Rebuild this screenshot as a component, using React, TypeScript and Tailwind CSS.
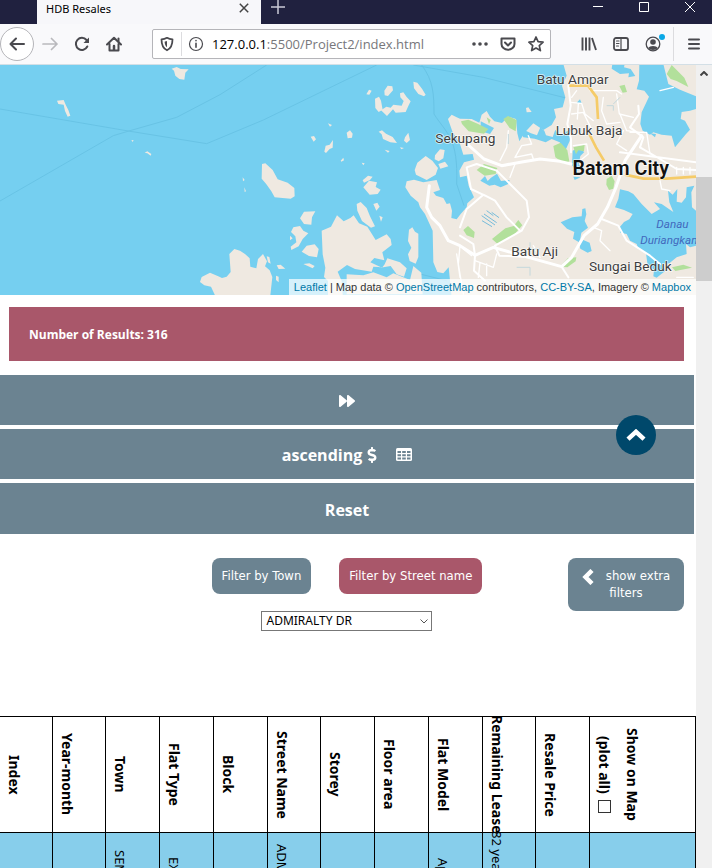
import React from "react";
import { FaDollarSign, FaForward } from "react-icons/fa";

const LAND = "#efe9e1";
const WATER = "#75cff0";
const PARK = "#b2e09b";

const blueBar =
  "flex w-full items-center justify-center bg-[#6b8391] pt-0.5 text-[16px] leading-5 font-bold text-white";

function Icon({ children, className = "" }: { children: React.ReactNode; className?: string }) {
  return (
    <svg
      viewBox="0 0 16 16"
      fill="none"
      stroke="currentColor"
      strokeWidth="2"
      strokeLinecap="round"
      strokeLinejoin="round"
      className={`size-4 shrink-0 ${className}`}
      aria-hidden="true"
    >
      {children}
    </svg>
  );
}

function TabStrip() {
  return (
    <div className="flex h-6 shrink-0 items-stretch bg-[#20213f] text-white">
      <div className="ml-[37px] flex w-56 items-start justify-between bg-[#f7f7fa] pr-3 pl-[9px] font-['Noto_Sans',sans-serif] text-[11px] leading-[18px] text-black">
        <span>HDB Resales</span>
        <button aria-label="Close tab" className="mt-px">
          <svg viewBox="0 0 10 14" className="h-3.5 w-2.5 text-[#444]" stroke="currentColor" strokeWidth="1.5" aria-hidden="true">
            <path d="M.8 2.8l8.4 8.4M9.2 2.8L.8 11.2" />
          </svg>
        </button>
      </div>
      <button aria-label="New tab" className="ml-2.5 self-start">
        <svg viewBox="0 0 14 14" className="size-3.5 text-[#c9c9d6]" stroke="currentColor" strokeWidth="1.5" aria-hidden="true">
          <path d="M0 7h14M7 0v14" />
        </svg>
      </button>
      <div className="ml-auto flex items-start gap-9 pt-0.5 pr-[17px]">
        <button aria-label="Minimize">
          <svg viewBox="0 0 10 10" className="size-2.5" stroke="white" aria-hidden="true"><path d="M0 4.500h10" /></svg>
        </button>
        <button aria-label="Maximize">
          <svg viewBox="0 0 10 10" className="size-2.5" stroke="white" fill="none" aria-hidden="true"><path d="M.5.5h9v9h-9z" /></svg>
        </button>
        <button aria-label="Close">
          <svg viewBox="0 0 10 10" className="size-2.5" stroke="white" aria-hidden="true"><path d="M0 0l10 10M10 0L0 10" /></svg>
        </button>
      </div>
    </div>
  );
}

function Toolbar() {
  return (
    <div className="flex h-[41px] shrink-0 items-center border-b border-[#d3dfe6] bg-[#f9f9fb] text-[#4a4a4f]">
      <button aria-label="Back" className="flex size-[34px] shrink-0 items-center justify-center rounded-full border border-[#b5b5b9] bg-white">
        <Icon><path d="M15 8H1.500M7 2.500L1.500 8 7 13.500" /></Icon>
      </button>
      <button aria-label="Forward" className="ml-2 text-[#b9b9bd]">
        <Icon><path d="M1 8h14M9.500 2.500L15 8l-5.500 5.500" strokeWidth="1.700" /></Icon>
      </button>
      <button aria-label="Reload" className="ml-4">
        <Icon>
          <path d="M13.300 10.500A6 6 0 1 1 12.500 4" />
          <path d="M15 1.500V7H9.500z" fill="currentColor" stroke="none" />
        </Icon>
      </button>
      <button aria-label="Home" className="ml-4">
        <Icon>
          <path d="M1 8.500L8 1.800l7 6.700M3.500 8v6.500h9V8" />
          <path d="M8 13.500V10" strokeWidth="2.500" />
          <path d="M12.500 2.500v3" />
        </Icon>
      </button>
      <div className="ml-[30px] flex h-[30px] min-w-0 flex-1 items-center rounded-[2px] border border-[#b5b5b9] bg-white pr-1.5 pl-1.5">
        <Icon>
          <path d="M8 1.800C6 3 4 3.300 2.500 3.300c0 5 1 9 5.500 11 4.500-2 5.500-6 5.500-11C12 3.300 10 3 8 1.800z" strokeWidth="1.800" />
          <path d="M8 5C7 5.500 6.500 5.600 5.600 5.700c.2 2.600.8 4.400 2.400 5.600z" fill="currentColor" stroke="none" />
        </Icon>
        <span className="mx-1.5 h-6 w-px bg-[#dcdcdf]" />
        <Icon>
          <circle cx="8" cy="8" r="6.500" strokeWidth="1.200" />
          <path d="M8 7.300v4M8 4.600v.2" strokeWidth="1.600" />
        </Icon>
        <div className="relative ml-2 min-w-0 flex-1 text-[13px] leading-5">
          <input
            aria-label="Address"
            className="block w-full bg-transparent text-[#77777b] outline-none"
            defaultValue="127.0.0.1:5500/Project2/index.html"
          />
          <span aria-hidden="true" className="pointer-events-none absolute top-0 left-0 bg-white text-black">127.0.0.1</span>
        </div>
        <button aria-label="Page actions">
          <Icon><path d="M2 8h.01M8 8h.01M14 8h.01" strokeWidth="3.600" /></Icon>
        </button>
        <button aria-label="Save to Pocket" className="ml-3">
          <Icon>
            <path d="M1.500 2.500h13V8a6.500 5.800 0 0 1-13 0z" />
            <path d="M5 6.500l3 3 3-3" />
          </Icon>
        </button>
        <button aria-label="Bookmark this page" className="ml-3">
          <Icon><path d="M8 1l2.100 4.700 5 .5-3.800 3.400 1.100 5L8 12l-4.400 2.600 1.100-5L.9 6.200l5-.5z" strokeWidth="1.700" /></Icon>
        </button>
      </div>
      <button aria-label="Library" className="ml-[30px]">
        <Icon><path d="M1.500 1.500v13M5 1.500v13M8.500 1.500v13M11 2l4 12" strokeWidth="1.900" strokeLinecap="butt" /></Icon>
      </button>
      <button aria-label="Sidebars" className="ml-4">
        <Icon>
          <rect x="1" y="2" width="14" height="12" rx="2" strokeWidth="1.800" />
          <path d="M8 2v12M3.500 5h2.500M3.500 7.500h2.500M3.500 10h2" strokeWidth="1.200" />
        </Icon>
      </button>
      <button aria-label="Account" className="relative ml-4">
        <Icon>
          <circle cx="8" cy="8" r="6.800" strokeWidth="1.300" />
          <circle cx="8" cy="6" r="2.800" fill="currentColor" stroke="none" />
          <path d="M3.300 12c1-2.700 8.400-2.700 9.400 0-2 2.500-7.400 2.500-9.400 0z" fill="currentColor" stroke="none" />
        </Icon>
        <span className="absolute -top-0.5 -right-1 size-1.5 rounded-full bg-[#0aa8e6]" />
      </button>
      <span className="ml-3 h-[34px] w-px bg-[#dcdcdf]" />
      <button aria-label="Menu" className="mr-2.5 ml-3">
        <Icon><path d="M3 3.500h10M3 8h10M3 12.500h10" /></Icon>
      </button>
    </div>
  );
}

function MapView() {
  return (
    <div className="relative h-[230px] overflow-hidden">
      <svg
        viewBox="0 3 2088 690"
        preserveAspectRatio="xMaxYMid slice"
        className="block size-full"
        role="img"
        aria-label="Map of Batam"
        style={{ fontFamily: 'Roboto, "Open Sans", sans-serif' }}
      >
        <rect width="2088" height="700" fill={WATER} />
        <g fill="none" stroke="#68c3e5" strokeWidth="3">
          <path d="M0 135L385 201L620 239L790 168L1130 3" />
          <path d="M0 411L340 215L390 200L530 160L660 92L800 3" />
          <path d="M1265 3C1300 50 1302 90 1302 150C1340 210 1375 220 1370 360L1392 425" />
          <path d="M1240 3L1450 40L1710 105" />
          <path d="M1240 625L1340 650" />
        </g>
        <g fill={LAND}>
          <path d="M515 14l15-5 12 6 24 1-10 10-3 21-15-2-12-10-4-15zM171 110l20-2 6 14 8 16 6 17-8 3-8-17-4-19-16-2z" />
          <path d="M434 266l8-4 12 8-2 5-10-7zM394 228l7 1-3 5z" />
          <path d="M688 570l15-15 17 5 15 10 14 13 2 25 18 5 5-28 15-15 12 22-6 15 14 12 8 20-6 55H645l-12-26-20-4-13-10 5-15 25-13 23 10 13 6 14-4 12-14z" />
        </g>
        <g transform="translate(690 0)" fill={LAND}>
          <path d="M96 300l10-2 22 20 15 28 30 10 20 16 1 25-12 7-48-4-10-18-16-23-13-15z" />
          <path d="M463 80l10-15 14 2 2 12-15 17-10-2zM550 53l12 3 14 18 11 18-5 5-17-7-13-17zM435 104l12-6 6 12 5 27-12 7-10-12z" />
          <path d="M510 88l10-3 10 14 12 13-7 14-8 18-30 2-8-10-18 20-18-17 16-11 13 3 8-9 25 3 6-14-10-11z" />
          <path d="M446 203l10-4 12 10 20 10 13 18-20-2-22-10-4-14zM525 220l10-14 5 22-10 9-8-7zM409 91l8-14 8 3-7 12zM242 218l10-2 6 10-7 7zM283 263l4-18 12-3 10-14-1 23-9 4-11 12zM350 206l10-7 8 10-2 12-13 2zM294 178l12 5-6 5zM332 290l8-9 2 8-8 4zM464 257l15 4-5 5zM510 250l12 2-8 4z" />
          <path d="M587 276l20 14 17 22-7 20-27 16-32-16-4-14 8-22zM615 274l15-18 14 2-4 25-14 9-12-6zM625 300l20-7 10 14-24 7z" />
          <path d="M380 420l12-6 18 18 10 25 15 30-12 4-27-20-14-31zM398 349l16-14 14 3-8 10-18 8zM400 370l17-20 24 5-4 14 15 8-9 13-24 2zM430 420l12-4 7 12-10 12zM448 455l10 5-5 13zM395 296l9 2-4 6z" />
          <path d="M210 463l12-20 34-1-10 18-2 22-22-2zM190 490l20-4 10 14 15 8-17 17-12 22-22 11-2-10 17-13-3-18-13-13zM180 515l8 8-8 6zM215 563l15-18 24-4 12 14-5 25-24-4zM220 600l18-2 16 8-6 7z" />
          <path d="M275 500l28-12 18-34 20 18 20-10 10-8 16 24 25 10 25 40 33-17 12 14 3 18-28 22 6 24-30-7-12 13 35 16 8-10 8-18 38 12 20 18-8 25-22-7-18-25-22 4-30-2-5 15-50-8-24-12-28 20 12 28 4 50h-45v-50l-12-12 4-28-8-40z" />
          <path d="M537 497l10-7 8 13 10 6v70l-8 20-18-8-5-20 10-20-10-20zM350 631l50 3 30-9 40 15 20-12 50 20 10-42 24 20 4 65H350zM140 604l12-2 14 12-20 1zM138 635l8 3v17l-8-7zM110 577l8 2 4 20-8-4zM38 340l6 8-5 4zM43 370l5 12-4 2z" />
        </g>
        <g transform="translate(1380 0)">
          <path
            fill={LAND}
            d="M310 0H740V700H-25L-34 610-50 628-68 624-80 595-82 500-105 450-120 430-125 415-148 395-164 370-160 352-138 347-110 355-70 348-60 378-80 385-72 395-50 402-40 420-30 418-24 440 -26 462 -10 466 2 450 20 430 22 418 42 400 26 365 20 335 0 340-2 320 12 295 42 287 38 270 10 272 0 240-22 205-36 165-25 152-10 160 0 164 35 165 58 176 65 152 80 141 90 158 103 172 126 177 145 158 168 165 172 208 178 232 195 205 220 178 250 198 275 183 288 160 282 135 308 130 316 100 306 65 320 35Z"
          />
          <g fill={WATER}>
            <path d="M538 0H610L625 60 660 77 708 97V135L690 140 665 144 662 165 675 170 690 197 678 210 645 250 635 215 605 212 580 205 570 212 548 200 541 180 545 145 567 98 553 80 530 76 537 50zM457 0H494L492 10 512 15 526 36 505 40 507 28 480 30 455 14z" />
            <path d="M480 376L505 382 520 390 545 420 575 450 600 435 582 415 605 420 640 444 628 415 624 380 638 392 652 375 650 413 665 416 678 400 680 370 703 365 694 385 696 430 708 440V545L690 550 678 540 680 570 650 580 628 598 605 600 617 620 604 630 590 641 580 637 582 618 562 598 558 568 535 555 530 540 510 530 500 510 481 506 479 490 492 474 508 466 518 450 492 438 465 430 475 405z" />
            <path d="M302 475l35-15 28-3 2-22 9-2 3 18-5 20 10 20-20 15-3 18 28 12 6 25-12 5-22-12-5-20-17-10 4-20-22-10zM61 350l14-14 8 15 10-10 18-12 12 22 26-3-4 12-23 10-18-8-16 3zM338 260l15-8 20 12-12 12-5 25 12 14-20 6-12-18zM340 338l22 2-18 8zM62 172l40 20-12 18-28-8zM175 190l38 18 18 6 10-24 12 10 5 14 20 5 8-22 12 18 34-20-3 36-12 26-18-22-24-10-18 10-33-11-34-4z" />
            <path d="M570 208l18 2-3 10zM350 116l10-10 6 15z" />
          </g>
          <path fill={LAND} d="M198 132l7-2 10 14-15 1zM610 628l90-44 8 12v35l-60-5-25 10z" />
          <g fill={PARK}>
            <path d="M3 172l22-5 28 12 32 16-13 14-46-7-20-22zM130 165l14-9 26 12-3 34-18-10zM80 160l12 8-5 13zM280 246l22-10 20 23 6 33-14 8-28-20zM340 250l34-8-2 20-17-3-7 12zM50 318l22-18 40 12-5 18-33 5zM478 66l16-4 7 22-13 2zM620 30l15-27 18 18 20 20 12 28-35-18-18-6zM440 345l15-10 9 17-4 22-13 4-8-16zM96 525l40-32 25-7 14-18 12 16-28 32-47 23zM10 498l14-12 20 18-2 18-22-8zM300 608l24-26 25-2-2 12-25 18zM636 610l34-8 26 9-50 10z" />
          </g>
          <g fill="none" stroke="#fff" strokeLinecap="round" strokeLinejoin="round">
            <g strokeWidth="9">
              <path d="M-92 365L-100 430-85 460-60 485-35 530 0 545 45 574 100 550 240 590 305 608 335 580 372 515 413 480 442 430 468 370 495 290 525 245 545 215" />
              <path d="M25 243L72 285 125 305 190 293 240 285 300 292 333 300" />
            </g>
            <g strokeWidth="6">
              <path d="M325 65L332 125 322 180 333 225 333 265" />
              <path d="M535 125L537 150 510 190 550 220 540 250" />
              <path d="M110 320L140 350 200 410 207 460 185 500 105 545 118 575 190 578" />
              <path d="M0 490L20 435 70 392 105 410 140 460 180 500M75 395L33 375 20 310 50 300 110 320M0 515L40 540 45 574 42 620 75 650" />
              <path d="M425 465L475 485 500 530 570 575 600 600M305 608L325 640" />
              <path d="M480 265L560 275 708 295M540 250L600 285 650 315 708 318" />
            </g>
            <g strokeWidth="4">
              <path d="M332 115L365 118 375 150 400 170M350 80L335 100M335 150L370 145 392 190M355 120L352 165" />
              <path d="M390 80H470L485 90M430 100L425 140 440 180 480 175M470 90L478 150 520 160M480 150L500 200 540 205M490 200L470 240 500 260M510 205L560 205 570 270M600 80L640 70" />
              <path d="M145 200L140 250 120 290M165 280L185 245 215 240 205 215M165 280L215 270 220 285M340 245L380 240 385 270 360 290M135 305L165 300 150 340" />
              <path d="M0 640L-10 570M45 590L100 610 110 570M60 595L55 640M80 600L80 635M0 545L-5 600 10 690M35 575L10 555M400 490L425 500 420 530 450 560M220 545L240 580M650 640L700 640M600 350L605 375 630 380M650 310V330M670 310V330M690 310V330" />
            </g>
          </g>
          <path d="M328 65H384L410 100 414 165M388 210L408 250 432 290M495 332L550 344 620 344 708 338" fill="none" stroke="#f5cb68" strokeWidth="8" />
          <path d="M65 455l40 28M72 450l38 26M95 445l22 16M66 470l30 18M80 440l20 15" fill="none" stroke="#77bcda" strokeWidth="3" />
          <path d="M440 125h20v15M480 100l-20 20M145 210v30M210 535v20h30M210 635v-25h-40" fill="none" stroke="#c4d8dc" strokeWidth="3" />
          <g stroke="#fff" strokeWidth="5" strokeLinejoin="round" paintOrder="stroke" strokeOpacity=".7">
            <g fill="#3e3e40" fontSize="41" textAnchor="middle">
              <text x="338" y="60">Batu Ampar</text>
              <text x="387" y="212">Lubuk Baja</text>
              <text x="16" y="236">Sekupang</text>
              <text x="224" y="577">Batu Aji</text>
              <text x="511" y="621">Sungai Beduk</text>
            </g>
            <text x="482" y="333" fontSize="59" fontWeight="600" textAnchor="middle" fill="#111">Batam City</text>
          </g>
          <g fill="#4269bd" fontSize="35" fontStyle="italic">
            <text x="589" y="492">Danau</text>
            <text x="541" y="539">Duriangkang</text>
          </g>
        </g>
      </svg>
      <div className="absolute right-0 bottom-0 bg-white/70 px-[5px] font-['Liberation_Sans',Arial,sans-serif] text-[11px] leading-4 whitespace-nowrap text-[#333]">
        <a href="#leaflet" className="text-[#0078a8]">Leaflet</a> | Map data ©{" "}
        <a href="#osm" className="text-[#0078a8]">OpenStreetMap</a> contributors,{" "}
        <a href="#license" className="text-[#0078a8]">CC-BY-SA</a>, Imagery ©{" "}
        <a href="#mapbox" className="text-[#0078a8]">Mapbox</a>
      </div>
    </div>
  );
}

const columns = [
  { name: "Year-month", value: "" },
  { name: "Town", value: "SEMBAWANG" },
  { name: "Flat Type", value: "EXECUTIVE" },
  { name: "Block", value: "" },
  { name: "Street Name", value: "ADMIRALTY DR" },
  { name: "Storey", value: "" },
  { name: "Floor area", value: "" },
  { name: "Flat Model", value: "Apartment" },
  { name: "Remaining Lease", value: "82 years 11 months" },
  { name: "Resale Price", value: "" },
];

function Vertical({ children }: { children: React.ReactNode }) {
  return (
    <div className="flex h-[115px] w-7 items-center justify-center leading-7 whitespace-nowrap [writing-mode:vertical-rl]">
      {children}
    </div>
  );
}

function ResultsTable() {
  return (
    <table className="w-full table-fixed border-collapse font-['Noto_Sans',sans-serif] text-[14px] text-black [&_td]:border [&_td]:border-black [&_td]:p-0 [&_th]:border [&_th]:border-black [&_th]:p-0">
      <colgroup>
        <col className="w-[52px]" />
        {columns.map((c) => (
          <col key={c.name} />
        ))}
        <col className="w-[106px]" />
      </colgroup>
      <thead>
        <tr>
          <th className="border-l-0!"><Vertical>Index</Vertical></th>
          {columns.map((c) => (
            <th key={c.name}><Vertical>{c.name}</Vertical></th>
          ))}
          <th>
            <div className="flex h-[115px] w-14 flex-col items-center leading-7 whitespace-nowrap [writing-mode:vertical-rl]">
              <span>Show on Map</span>
              <label className="flex items-center gap-1.5">
                (plot all)
                <input type="checkbox" className="size-[13px] appearance-none border border-[#333] bg-white" />
              </label>
            </div>
          </th>
        </tr>
      </thead>
      <tbody className="text-[13px]">
        <tr className="bg-[#87ceeb]">
          <td className="border-l-0!"><Vertical>{""}</Vertical></td>
          {columns.map((c) => (
            <td key={c.name}><Vertical>{c.value}</Vertical></td>
          ))}
          <td />
        </tr>
      </tbody>
    </table>
  );
}

export default function App() {
  return (
    <div className="flex h-screen flex-col overflow-hidden bg-white font-['Open_Sans','Noto_Sans',sans-serif]">
      <TabStrip />
      <Toolbar />
      <div className="flex min-h-0 flex-1">
        <main className="relative min-w-0 flex-1 overflow-hidden font-['DejaVu_Sans_Condensed','Noto_Sans',sans-serif]">
          <MapView />
          <div className="mt-3 mr-3 ml-[9px] bg-[#a9576a] px-5 pt-[19px] pb-[17px] font-['Open_Sans',sans-serif] text-[12px] leading-[18px] font-bold text-white">
            Number of Results: 316
          </div>
          <div className="mt-3.5 mr-0.5 flex flex-col gap-1 font-['Open_Sans',sans-serif]">
            <button aria-label="Next results" className={`h-[50px] ${blueBar}`}>
              <FaForward className="size-4" />
            </button>
            <button className={`h-[50px] ${blueBar}`}>
              ascending
              <FaDollarSign className="ml-0.5 size-4" />
              <svg viewBox="0 0 16 14" className="ml-4 h-3.5 w-4" aria-hidden="true">
                <rect width="16" height="13" rx="1.500" fill="white" />
                <path d="M1.500 3h3.500v2H1.500zM6.200 3h3.600v2H6.200zM11 3h3.500v2H11zM1.500 6.300h3.500v2H1.500zM6.200 6.300h3.600v2H6.200zM11 6.300h3.500v2H11zM1.500 9.600h3.500v2H1.500zM6.200 9.600h3.600v2H6.200zM11 9.600h3.500v2H11z" fill="#6b8391" />
              </svg>
            </button>
            <button className={`h-[51px] ${blueBar}`}>Reset</button>
          </div>
          <div className="mt-6 mr-0.5 grid grid-cols-[1fr_auto_1fr] items-start text-[13px] leading-4 text-white">
            <div className="col-start-2 flex flex-col items-center">
              <div className="flex gap-7">
                <button className="rounded-lg bg-[#6b8391] p-2.5">Filter by Town</button>
                <button className="rounded-lg bg-[#a9576a] p-2.5">Filter by Street name</button>
              </div>
              <div className="relative mt-[17px] text-black">
                <select aria-label="Street name" className="block h-5 w-[171px] appearance-none border border-[#777] bg-white pl-1 font-['Noto_Sans',sans-serif] text-[12px] leading-4">
                  <option>ADMIRALTY DR</option>
                </select>
                <svg viewBox="0 0 8 5" className="pointer-events-none absolute top-2 right-1 h-[5px] w-2" fill="none" stroke="#555" aria-hidden="true">
                  <path d="M.5.5L4 4 7.500.5" />
                </svg>
              </div>
            </div>
            <button className="mr-2.5 w-[116px] justify-self-end rounded-lg bg-[#6b8391] p-2.5 text-center">
              <svg viewBox="0 0 12 16" className="mr-3 inline h-4 w-3 align-middle" fill="none" stroke="currentColor" strokeWidth="4.500" aria-hidden="true">
                <path d="M10 1.500L3.500 8l6.500 6.500" />
              </svg>
              show extra filters
            </button>
          </div>
          <div className="mt-[85px]">
            <ResultsTable />
          </div>
          <button aria-label="Back to top" className="absolute top-[350px] right-10 flex size-10 items-center justify-center rounded-full bg-[#00486b] text-white">
            <svg viewBox="0 0 20 12" className="h-3 w-5" fill="none" stroke="currentColor" strokeWidth="4.500" aria-hidden="true">
              <path d="M2 10.200L10 2.800l8 7.400" />
            </svg>
          </button>
        </main>
        <div className="flex w-4 shrink-0 flex-col items-center bg-[#f0f0f0]" aria-hidden="true">
          <svg viewBox="0 0 8 5" className="mt-1.5 h-[5px] w-2" fill="none" stroke="#444" strokeWidth="2">
            <path d="M.5 4.500L4 1l3.500 3.500" />
          </svg>
          <span className="mt-[101px] h-[104px] w-full bg-[#cdcdcd]" />
        </div>
      </div>
    </div>
  );
}
